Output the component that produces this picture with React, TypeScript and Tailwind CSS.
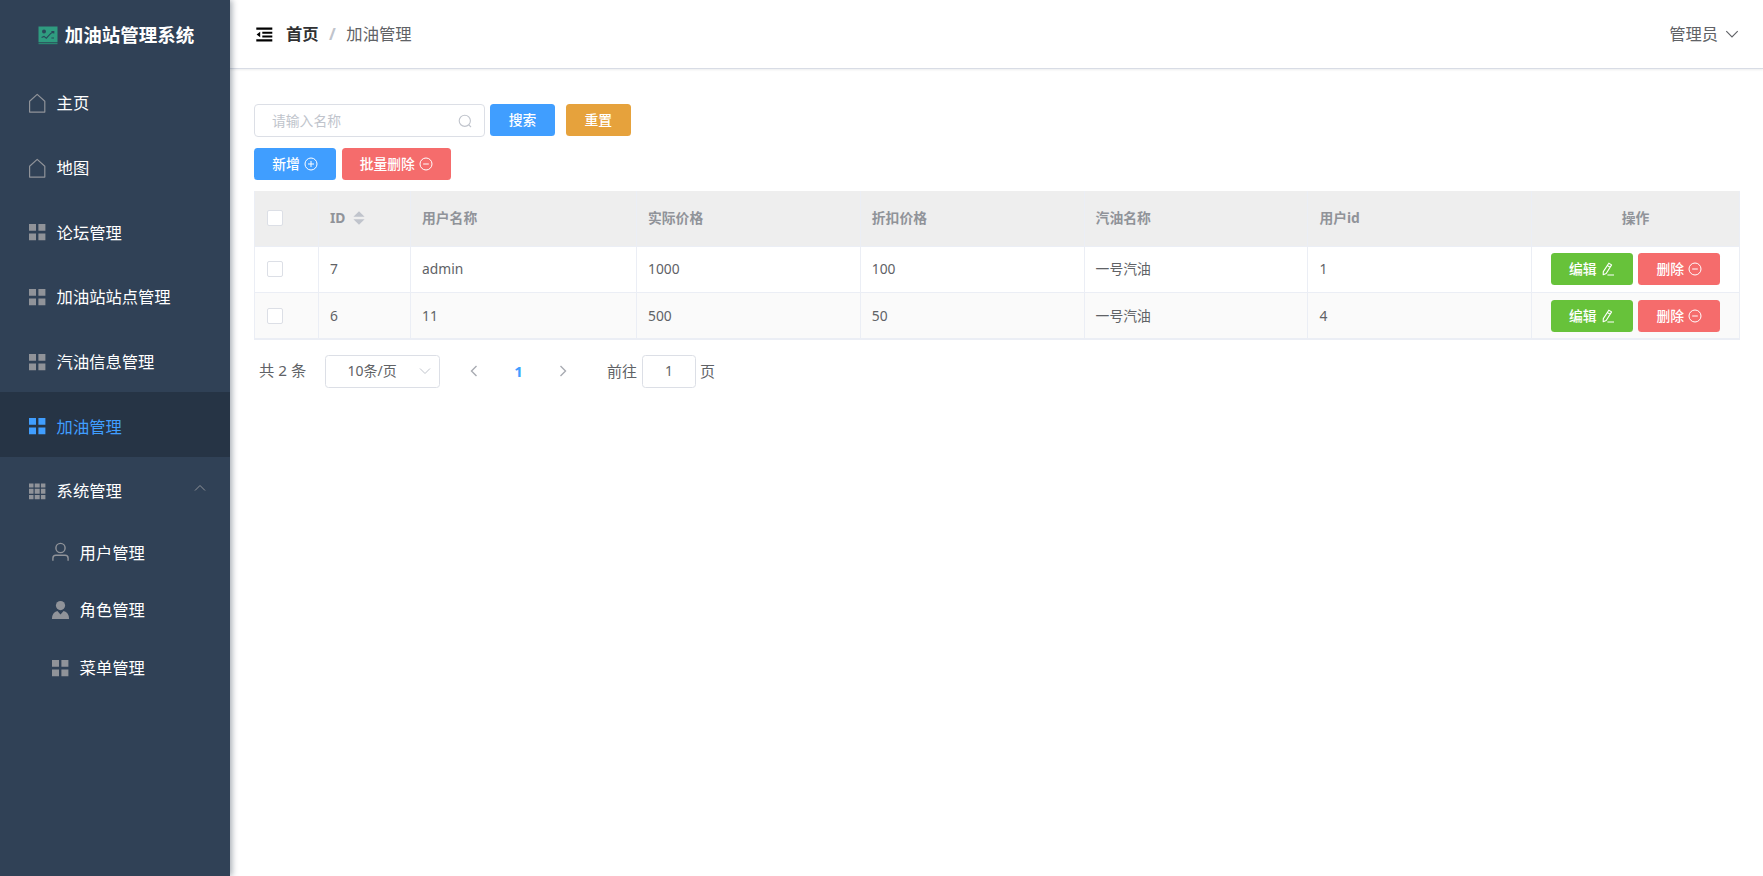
import React from 'react';

// Iconos del menú y de los botones
const HomeIcon = () => (
  <svg viewBox="0 0 21 21" className="w-[21px] h-[21px]" fill="none" stroke="currentColor" strokeWidth="1.2">
    <path d="M2.6 19.1V8.2L10.2 1.4L17.8 8.2V19.1Z" strokeLinejoin="round" />
  </svg>
);

const MenuIcon = () => (
  <svg viewBox="0 0 21 21" className="w-[21px] h-[21px]" fill="currentColor">
    <path d="M2 2h7v6.8h-7zM11.4 2h7v6.8h-7zM2 11.4h7v6.8h-7zM11.4 11.4h7v6.8h-7z" />
  </svg>
);

const GridIcon = () => (
  <svg viewBox="0 0 21 21" className="w-[21px] h-[21px]" fill="currentColor">
    <path d="M2 2.5h4.5v4h-4.5zM7.7 2.5h5v4h-5zM13.9 2.5h4.5v4h-4.5zM2 7.7h4.5v5h-4.5zM7.7 7.7h5v5h-5zM13.9 7.7h4.5v5h-4.5zM2 13.9h4.5v4.4h-4.5zM7.7 13.9h5v4.4h-5zM13.9 13.9h4.5v4.4h-4.5z" />
  </svg>
);

const UserIcon = () => (
  <svg viewBox="0 0 21 21" className="w-[21px] h-[21px]" fill="none" stroke="currentColor" strokeWidth="1.4">
    <circle cx="10.5" cy="6" r="4.6" />
    <path d="M2.9 18.8V16.2Q2.9 13.2 5.9 13.2H15.1Q18.1 13.2 18.1 16.2V18.8" />
  </svg>
);

const RoleIcon = () => (
  <svg viewBox="0 0 21 21" className="w-[21px] h-[21px]" fill="currentColor">
    <circle cx="10.5" cy="5.6" r="4.6" />
    <path d="M1.9 18.9Q1.9 12.4 7.4 10.9L10.5 14.4L13.6 10.9Q19.1 12.4 19.1 18.9Z" />
  </svg>
);

const PlusIcon = () => (
  <svg viewBox="0 0 14 14" className="w-[14px] h-[14px]" fill="none" stroke="currentColor" strokeWidth="1">
    <circle cx="7" cy="7" r="6" />
    <path d="M4 7h6M7 4v6" />
  </svg>
);

const MinusIcon = () => (
  <svg viewBox="0 0 14 14" className="w-[14px] h-[14px]" fill="none" stroke="currentColor" strokeWidth="1">
    <circle cx="7" cy="7" r="6" />
    <path d="M4.2 7h5.6" />
  </svg>
);

const EditIcon = () => (
  <svg viewBox="0 0 14 14" className="w-[14px] h-[14px]" fill="none" stroke="currentColor" strokeWidth="1.1">
    <path d="M7.8 1.2L10.6 2.9L5.2 11.5L2.2 12.7L2.3 9.6ZM6.4 3.6L9.2 5.3M6.4 13h6.6" strokeLinejoin="round" />
  </svg>
);

interface ArrowProps {
  direction: 'up' | 'down' | 'left' | 'right';
  className?: string;
  weight?: number;
}

const paths = {
  up: 'M2 9.5L7 4.5L12 9.5',
  down: 'M2 4.5L7 9.5L12 4.5',
  left: 'M9.5 2L4.5 7L9.5 12',
  right: 'M4.5 2L9.5 7L4.5 12',
};

const Arrow = ({ direction, className = 'w-[14px] h-[14px]', weight = 1 }: ArrowProps) => (
  <svg viewBox="0 0 14 14" className={className} fill="none" stroke="currentColor" strokeWidth={weight}>
    <path d={paths[direction]} />
  </svg>
);

const menu = [
  { label: '主页', icon: <HomeIcon /> },
  { label: '地图', icon: <HomeIcon /> },
  { label: '论坛管理', icon: <MenuIcon /> },
  { label: '加油站站点管理', icon: <MenuIcon /> },
  { label: '汽油信息管理', icon: <MenuIcon /> },
  { label: '加油管理', icon: <MenuIcon />, active: true },
  { label: '系统管理', icon: <GridIcon />, open: true },
];

const subMenu = [
  { label: '用户管理', icon: <UserIcon /> },
  { label: '角色管理', icon: <RoleIcon /> },
  { label: '菜单管理', icon: <MenuIcon /> },
];

const rows = [
  { id: 7, user: 'admin', price: 1000, discount: 100, oil: '一号汽油', uid: 1 },
  { id: 6, user: '11', price: 500, discount: 50, oil: '一号汽油', uid: 4 },
];

const Sidebar = () => (
  <aside className="relative z-10 w-[230px] shrink-0 bg-[#304156] shadow-[2px_0_6px_rgba(0,21,41,0.35)]">
    <div className="flex h-[69px] items-center justify-center gap-[7px] pt-[1px] pl-[2px] text-white">
      <svg viewBox="0 0 20 19" className="w-[20px] h-[19px]">
        <path d="M0.5 0.5h19v15.5h-19z" fill="#2f9c80" />
        <path d="M0.5 16.6h19v1.6h-19z" fill="#2a8672" />
        <circle cx="6" cy="5.6" r="2" fill="#29485a" />
        <path d="M3.6 11.6L6 10.4L8.3 12.2L13 7.2L16 6M13.4 5.6h2.4v2M13.4 12h2.6" fill="none" stroke="#29485a" strokeWidth="1.1" />
      </svg>
      <b className="text-[18.5px] leading-none">加油站管理系统</b>
    </div>
    <nav className="text-[16.3px] text-white">
      {menu.map((item) => (
        <div
          key={item.label}
          className={
            item.active
              ? 'flex h-[64.7px] items-center bg-[#263445] pt-[4px] pl-[23.5px] text-[#409eff]'
              : 'flex h-[64.7px] items-center pt-[4px] pl-[23.5px]'
          }
        >
          <span className={item.active ? 'mr-[5.5px] flex w-[27.6px] justify-center' : 'mr-[5.5px] flex w-[27.6px] justify-center text-[#909399]'}>
            {item.icon}
          </span>
          <span>{item.label}</span>
          {item.open && <Arrow direction="up" className="mr-[23px] mb-[6px] ml-auto h-[14px] w-[14px] text-[#909399]" />}
        </div>
      ))}
      {subMenu.map((item) => (
        <div key={item.label} className="flex h-[57.7px] items-center pt-[4px] pl-[46.5px]">
          <span className="mr-[5.5px] flex w-[27.6px] justify-center text-[#909399]">{item.icon}</span>
          <span>{item.label}</span>
        </div>
      ))}
    </nav>
  </aside>
);

const Header = () => (
  <header className="flex h-[69px] items-center border-b border-[#d8dce5] pr-[23px] pl-[26px] text-[16.3px] shadow-[0_1px_2px_rgba(0,21,41,0.08)]">
    <svg viewBox="0 0 17 15" className="mr-[13px] h-[15px] w-[17px]" fill="#000">
      <path d="M0.3 0.6h16v2.2h-16zM6.3 4.8h10v2h-10zM6.3 8.6h10v2h-10zM0.3 12.2h16v2.2h-16zM4.2 4.8v5.4L0.6 7.5z" />
    </svg>
    <b className="text-[#303133]">首页</b>
    <span className="mx-[10.5px] font-bold text-[#c0c4cc]">/</span>
    <span className="text-[#606266]">加油管理</span>
    <div className="ml-auto flex items-center gap-[6px] text-[#606266]">
      <span>管理员</span>
      <Arrow direction="down" className="h-[16px] w-[16px]" />
    </div>
  </header>
);

const Checkbox = () => <span className="ml-[1px] block h-[16px] w-[16px] rounded-[2px] border border-[#dcdfe6] bg-white" />;

const button = 'flex h-[32px] items-center justify-center gap-[4px] rounded-[3.5px] text-white font-medium';
const th = 'border-r border-b border-[#ebeef5] px-[11px] pb-[2px] text-left font-bold';
const td = 'border-r border-b border-[#ebeef5] px-[11px]';

const DataTable = () => (
  <table className="mt-[11px] w-[1486px] table-fixed border-separate border-spacing-0 border-b border-l border-[#ebeef5] text-[13.8px] text-[#606266]">
    <colgroup>
      <col className="w-[64px]" />
      <col className="w-[92px]" />
      <col className="w-[226px]" />
      <col className="w-[223.8px]" />
      <col className="w-[223.8px]" />
      <col className="w-[223.8px]" />
      <col className="w-[223.8px]" />
      <col />
    </colgroup>
    <thead>
      <tr className="h-[56px] bg-[#eeeeee] text-[#909399]">
        <th className={th}><Checkbox /></th>
        <th className={th}>
          <span className="flex items-center gap-[8px]">
            ID
            <svg viewBox="0 0 12 14" className="h-[14px] w-[12px]" fill="#c0c4cc">
              <path d="M6 0.3L11.6 5.8H0.4zM6 13.7L11.6 8.2H0.4z" />
            </svg>
          </span>
        </th>
        <th className={th}>用户名称</th>
        <th className={th}>实际价格</th>
        <th className={th}>折扣价格</th>
        <th className={th}>汽油名称</th>
        <th className={th}>用户id</th>
        <th className="border-r border-b border-[#ebeef5] pb-[2px] text-center font-bold">操作</th>
      </tr>
    </thead>
    <tbody>
      {rows.map((row) => (
        <tr key={row.id} className="h-[46px] odd:[&>td]:pb-px even:bg-[#fafafa] even:[&>td]:pt-px">
          <td className={td}><Checkbox /></td>
          <td className={td}>{row.id}</td>
          <td className={td}>{row.user}</td>
          <td className={td}>{row.price}</td>
          <td className={td}>{row.discount}</td>
          <td className={td}>{row.oil}</td>
          <td className={td}>{row.uid}</td>
          <td className="border-r border-b border-[#ebeef5]">
            <div className="flex justify-center gap-[5.5px]">
              <button className={`${button} w-[82px] bg-[#67c23a]`}>编辑<EditIcon /></button>
              <button className={`${button} w-[82px] bg-[#f56c6c]`}>删除<MinusIcon /></button>
            </div>
          </td>
        </tr>
      ))}
    </tbody>
  </table>
);

const Pagination = () => (
  <div className="mt-[14.5px] flex h-[33px] items-center pl-[5px] text-[15px] text-[#606266]">
    <span className="w-[66px] text-[15.3px]">共 2 条</span>
    <div className="flex h-[33px] w-[115px] items-center justify-between rounded-[3.5px] border border-[#dcdfe6] pr-[7px] pl-[21.5px] text-[14px]">
      10条/页
      <Arrow direction="down" className="h-[14px] w-[14px] text-[#c0c4cc]" />
    </div>
    <div className="ml-[11px] flex items-center">
      <span className="flex w-[45px] justify-center text-[#a8abb2]"><Arrow direction="left" weight={1.4} /></span>
      <b className="w-[45px] text-center text-[#409eff]">1</b>
      <span className="flex w-[44px] justify-center text-[#a8abb2]"><Arrow direction="right" weight={1.4} /></span>
    </div>
    <span className="ml-[22px]">前往</span>
    <span className="mr-[4px] ml-[5px] flex h-[33px] w-[54px] items-center justify-center rounded-[3.5px] border border-[#dcdfe6] text-[13.8px]">1</span>
    <span>页</span>
  </div>
);

export default function App() {
  return (
    <div className="flex h-[876px] w-full overflow-hidden bg-white font-['Noto_Sans','Noto_Sans_CJK_SC',sans-serif] leading-none">
      <Sidebar />
      <div className="min-w-0 flex-1">
        <Header />
        <main className="pt-[35px] pl-[24px] text-[13.8px]">
          <div className="flex">
            <div className="flex h-[33px] w-[231px] items-center justify-between rounded-[4px] border border-[#dcdfe6] pr-[12.5px] pl-[17px] text-[#c0c4cc]">
              请输入名称
              <svg viewBox="0 0 14 14" className="h-[14px] w-[14px]" fill="none" stroke="currentColor" strokeWidth="1.1">
                <circle cx="6.8" cy="6.8" r="5.6" />
                <path d="M10.8 10.8L13 13" />
              </svg>
            </div>
            <button className={`${button} ml-[5px] w-[65px] bg-[#409eff]`}>搜索</button>
            <button className={`${button} ml-[11px] w-[64.5px] bg-[#e6a23c]`}>重置</button>
          </div>
          <div className="mt-[11px] flex gap-[5.5px]">
            <button className={`${button} w-[82px] bg-[#409eff]`}>新增<PlusIcon /></button>
            <button className={`${button} w-[109.5px] bg-[#f56c6c]`}>批量删除<MinusIcon /></button>
          </div>
          <DataTable />
          <Pagination />
        </main>
      </div>
    </div>
  );
}
